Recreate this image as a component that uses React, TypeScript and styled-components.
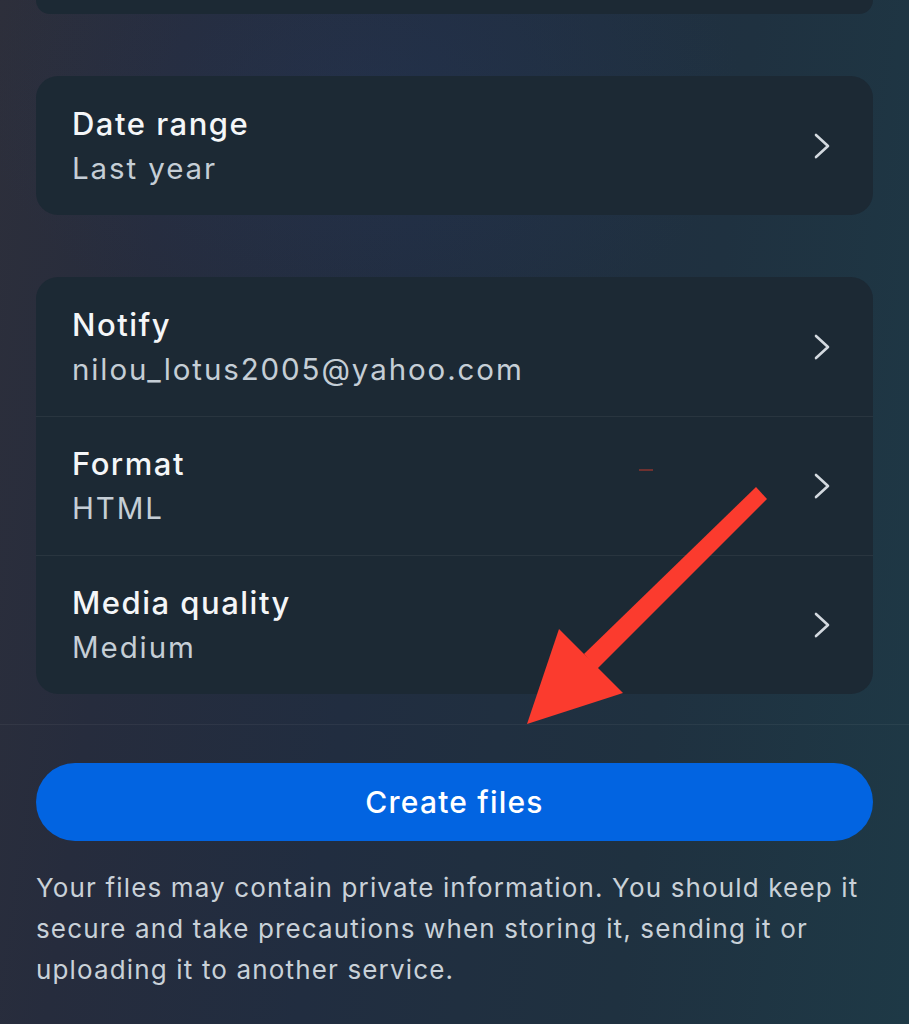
import React from "react";
import styled, { createGlobalStyle } from "styled-components";

const GlobalStyle = createGlobalStyle`
  html, body {
    margin: 0;
    padding: 0;
  }
  body {
    background: #1f2c3a;
    font-family: Inter, "Noto Sans", "Liberation Sans", sans-serif;
    -webkit-font-smoothing: antialiased;
  }
`;

const Screen = styled.div`
  position: relative;
  width: 909px;
  height: 1024px;
  overflow: hidden;
  background:
    radial-gradient(ellipse 60% 35% at 40% 10%, rgba(38, 58, 96, 0.3), transparent 70%),
    linear-gradient(98deg, #2d2f3b 0%, #262c3d 18%, #212d40 42%, #1f3140 72%, #1e3946 100%);
  box-sizing: border-box;
  padding: 0 36px;
  display: flex;
  flex-direction: column;
  & > * {
    flex-shrink: 0;
  }
`;

const Card = styled.div<{ $stub?: boolean; $last?: boolean }>`
  background: #1c2934;
  border-radius: ${(p) => (p.$stub ? "0 0 22px 22px" : "22px")};
  height: ${(p) => (p.$stub ? "14px" : "auto")};
  overflow: hidden;
  display: flex;
  flex-direction: column;
  margin-bottom: ${(p) => (p.$last ? "0" : "62px")};
`;

const Row = styled.div`
  height: 139px;
  flex-shrink: 0;
  box-sizing: border-box;
  padding: 0 36px;
  display: flex;
  align-items: center;
  justify-content: space-between;
  & + & {
    border-top: 1px solid rgba(255, 255, 255, 0.06);
  }
`;

const Texts = styled.div`
  display: flex;
  flex-direction: column;
`;

const Title = styled.div`
  color: #f4f6f8;
  font-size: 31px;
  font-weight: 500;
  line-height: 45px;
  letter-spacing: 1.5px;
`;

const Subtitle = styled.div`
  color: #c5ced6;
  font-size: 29.5px;
  font-weight: 400;
  line-height: 45px;
  letter-spacing: 1.9px;
`;

const Chevron = styled.svg`
  width: 18px;
  height: 28px;
  margin-right: 6px;
  flex-shrink: 0;
`;

const Footer = styled.div`
  margin: 30px -36px 0;
  padding: 38px 36px 0;
  border-top: 1px solid rgba(255, 255, 255, 0.05);
  display: flex;
  flex-direction: column;
`;

const PrimaryButton = styled.button`
  height: 78px;
  flex-shrink: 0;
  border: none;
  border-radius: 39px;
  background: #0264e1;
  color: #ffffff;
  font-family: inherit;
  font-size: 30px;
  font-weight: 500;
  letter-spacing: 1.2px;
  cursor: pointer;
`;

const Note = styled.p`
  margin: 26px 0 0;
  color: #c9d1d8;
  font-size: 26px;
  line-height: 41px;
  letter-spacing: 1.15px;
  white-space: nowrap;
`;

const Overlay = styled.svg`
  position: absolute;
  left: 0;
  top: 0;
  width: 909px;
  height: 1024px;
  pointer-events: none;
`;

const ChevronIcon = () => (
  <Chevron viewBox="0 0 18 28">
    <path
      d="M3 3 L15 14 L3 25"
      fill="none"
      stroke="#d3d9df"
      strokeWidth="2.6"
      strokeLinecap="round"
      strokeLinejoin="round"
    />
  </Chevron>
);

type Item = { title: string; value: string };

const SettingRow = ({ title, value }: Item) => (
  <Row>
    <Texts>
      <Title>{title}</Title>
      <Subtitle>{value}</Subtitle>
    </Texts>
    <ChevronIcon />
  </Row>
);

const exportItems: Item[] = [
  { title: "Notify", value: "nilou_lotus2005@yahoo.com" },
  { title: "Format", value: "HTML" },
  { title: "Media quality", value: "Medium" },
];

export default function App() {
  return (
    <>
      <GlobalStyle />
      <Screen>
        <Card $stub />
        <Card>
          <SettingRow title="Date range" value="Last year" />
        </Card>
        <Card $last>
          {exportItems.map((it) => (
            <SettingRow key={it.title} {...it} />
          ))}
        </Card>
        <Footer>
          <PrimaryButton>Create files</PrimaryButton>
          <Note>
            Your files may contain private information. You should keep it
            <br />
            secure and take precautions when storing it, sending it or
            <br />
            uploading it to another service.
          </Note>
        </Footer>
        <Overlay viewBox="0 0 909 1024">
          <rect x="639" y="469" width="14" height="2" fill="#c0392b" opacity="0.5" />
          <polygon points="756,487 767,499 597,669 584,654" fill="#fb3b2e" />
          <polygon points="559,629 623,693 527,724" fill="#fb3b2e" />
        </Overlay>
      </Screen>
    </>
  );
}
